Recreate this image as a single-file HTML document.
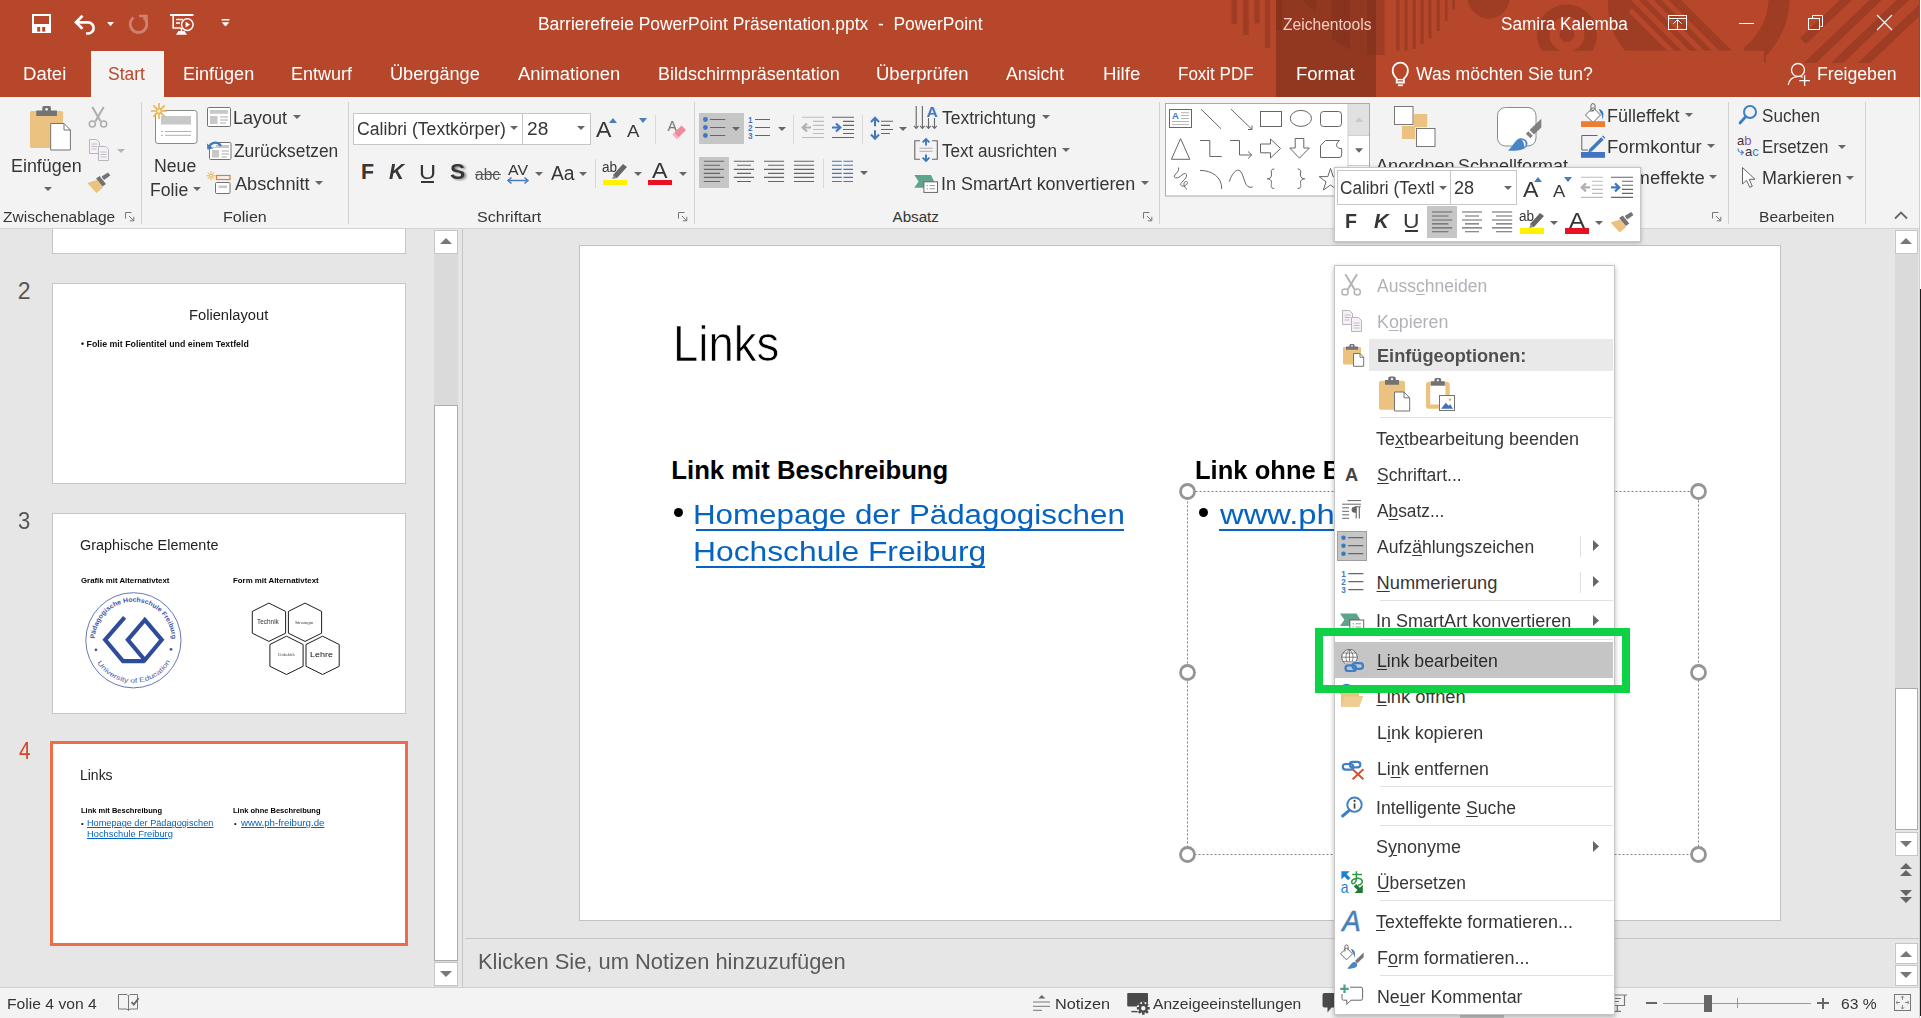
<!DOCTYPE html>
<html lang="de"><head><meta charset="utf-8"><title>PowerPoint</title>
<style>
html,body{margin:0;padding:0;}
body{width:1921px;height:1018px;overflow:hidden;position:relative;background:#fff;font-family:"Liberation Sans",sans-serif;}
div,svg,span.t{position:absolute;}
span.t{white-space:pre;transform-origin:0 50%;display:block;}
svg{overflow:visible;}
u{text-decoration-thickness:1px;text-underline-offset:2px;}
</style></head><body>
<div style="left:0px;top:0px;width:1920px;height:1018px;background:#E6E6E6;"></div>
<div style="left:0px;top:0px;width:1920px;height:97px;background:#B7472A;"></div>
<svg style="left:0;top:0;overflow:hidden" width="1920" height="64" viewBox="0 0 1920 64">
<defs><clipPath id="dc"><path d="M0 0 H1764 V50.7 H0 Z M1764 0 H1920 V63 H1764 Z M1366 50 H1386 V55.6 H1366 Z"/></clipPath></defs>
<g clip-path="url(#dc)">
<g fill="#9E3C24">
<rect x="1231.5" y="0" width="5.6" height="24"/>
<rect x="1243" y="0" width="5.7" height="35"/>
<rect x="1254.4" y="0" width="5.2" height="23.3"/>
<rect x="1264.8" y="0" width="5.2" height="48"/>
<rect x="1276" y="0" width="6" height="31"/>
<path d="M1302 0 H1317 L1315 13 Z"/>
<path d="M1331.5 0 H1350 V50 L1331.5 38.5 Z"/>
<rect x="1367" y="0" width="17.6" height="55"/>
<rect x="1396" y="0" width="3.6" height="50.7"/>
<rect x="1404.4" y="0" width="3.2" height="50.7"/>
<rect x="1412.7" y="0" width="3.2" height="49"/>
<rect x="1420.4" y="0" width="3.4" height="43.7"/>
<rect x="1428.3" y="0" width="3.2" height="38.5"/>
<rect x="1436.6" y="0" width="3.2" height="31"/>
<rect x="1445" y="0" width="2.6" height="21"/>
<rect x="1452.3" y="0" width="2.7" height="9.4"/>
<circle cx="1488.7" cy="-2.5" r="21"/>
<circle cx="1566.9" cy="34.4" r="7.5"/>
<path d="M1608 0 H1681 L1732 50.7 H1625 C1612 36 1607 18 1608 0 Z"/>
</g>
<g fill="none" stroke="#9E3C24">
<circle cx="1566.9" cy="34.4" r="23.8" stroke-width="12.4"/>
<path d="M1779 -12 C1781 14 1772 36 1755 52 L1756 66" stroke-width="21"/>
<path d="M1930 -52 L1790 82" stroke-width="8.5"/>
<path d="M1930 -26 L1790 108" stroke-width="8.5"/>
<path d="M1930 0 L1800 124" stroke-width="8.5"/>
<path d="M1852 -6 L1803 41" stroke-width="8.5"/>
</g>
<g stroke="#B7472A" stroke-width="5.2" fill="none">
<path d="M1631 -4 L1690 55"/>
<path d="M1646 -4 L1705 55"/>
<path d="M1661 -4 L1720 55"/>
<path d="M1630 10 L1672 52"/>
</g>
</g>
</svg>
<div style="left:1276px;top:0px;width:100px;height:97px;background:rgba(122,46,26,0.62);"></div>
<div style="left:91px;top:51px;width:73px;height:46px;background:#F3F3F3;"></div>
<div style="left:0px;top:97px;width:1920px;height:131px;background:#F3F3F3;"></div>
<div style="left:0px;top:228px;width:1920px;height:1px;background:#D4D4D4;"></div>
<div style="left:141px;top:102px;width:1px;height:122px;background:#D2D2D2;"></div>
<div style="left:348px;top:102px;width:1px;height:122px;background:#D2D2D2;"></div>
<div style="left:694px;top:102px;width:1px;height:122px;background:#D2D2D2;"></div>
<div style="left:1159px;top:102px;width:1px;height:122px;background:#D2D2D2;"></div>
<div style="left:1728px;top:102px;width:1px;height:122px;background:#D2D2D2;"></div>
<div style="left:1865px;top:102px;width:1px;height:122px;background:#D2D2D2;"></div>
<div style="left:699px;top:113px;width:45px;height:31px;background:#C6C6C6;"></div>
<div style="left:699px;top:157px;width:30px;height:31px;background:#C6C6C6;"></div>
<div style="left:655px;top:115px;width:1px;height:29px;background:#D8D8D8;"></div>
<div style="left:595px;top:159px;width:1px;height:29px;background:#D8D8D8;"></div>
<div style="left:793px;top:115px;width:1px;height:29px;background:#D8D8D8;"></div>
<div style="left:862px;top:115px;width:1px;height:29px;background:#D8D8D8;"></div>
<div style="left:823px;top:159px;width:1px;height:29px;background:#D8D8D8;"></div>
<div style="left:52px;top:229px;width:354px;height:25px;background:#fff;border:1px solid #C6C6C6;box-sizing:border-box;border-top:none;"></div>
<div style="left:52px;top:283px;width:354px;height:201px;background:#fff;border:1px solid #C6C6C6;box-sizing:border-box;"></div>
<div style="left:52px;top:513px;width:354px;height:201px;background:#fff;border:1px solid #C6C6C6;box-sizing:border-box;"></div>
<div style="left:50px;top:741px;width:358px;height:205px;background:#fff;border:3px solid #ED6C4A;box-sizing:border-box;"></div>
<div style="left:434px;top:230px;width:24px;height:757px;background:#DADADA;"></div>
<div style="left:434px;top:230px;width:24px;height:24px;background:#fff;border:1px solid #C6C6C6;box-sizing:border-box;"></div>
<div style="left:434px;top:405px;width:24px;height:556px;background:#fff;border:1px solid #ABABAB;box-sizing:border-box;"></div>
<div style="left:434px;top:962px;width:24px;height:24px;background:#fff;border:1px solid #C6C6C6;box-sizing:border-box;"></div>
<svg style="left:440px;top:237px;" width="12" height="8" viewBox="0 0 12 8"><path d="M0 7 L6 1 L12 7 Z" fill="#777"/></svg>
<svg style="left:440px;top:970px;" width="12" height="8" viewBox="0 0 12 8"><path d="M0 1 L6 7 L12 1 Z" fill="#777"/></svg>
<div style="left:462px;top:229px;width:1px;height:758px;background:#C6C6C6;"></div>
<div style="left:579px;top:245px;width:1202px;height:676px;background:#fff;border:1px solid #C2C2C2;box-sizing:border-box;"></div>
<div style="left:465px;top:938px;width:1455px;height:1px;background:#C6C6C6;"></div>
<div style="left:1895px;top:230px;width:23px;height:24px;background:#fff;border:1px solid #C6C6C6;box-sizing:border-box;"></div>
<svg style="left:1900px;top:237px;" width="12" height="8" viewBox="0 0 12 8"><path d="M0 7 L6 1 L12 7 Z" fill="#777"/></svg>
<div style="left:1895px;top:254px;width:23px;height:434px;background:#DADADA;"></div>
<div style="left:1895px;top:688px;width:23px;height:142px;background:#fff;border:1px solid #ABABAB;box-sizing:border-box;"></div>
<div style="left:1895px;top:832px;width:23px;height:24px;background:#fff;border:1px solid #C6C6C6;box-sizing:border-box;"></div>
<svg style="left:1900px;top:840px;" width="12" height="8" viewBox="0 0 12 8"><path d="M0 1 L6 7 L12 1 Z" fill="#777"/></svg>
<svg style="left:1900px;top:863px;" width="12" height="13" viewBox="0 0 12 13"><path d="M0 6 L6 0 L12 6 Z M0 13 L6 7 L12 13 Z" fill="#666"/></svg>
<svg style="left:1900px;top:890px;" width="12" height="13" viewBox="0 0 12 13"><path d="M0 0 L6 6 L12 0 Z M0 7 L6 13 L12 7 Z" fill="#666"/></svg>
<div style="left:1895px;top:943px;width:23px;height:21px;background:#fff;border:1px solid #C6C6C6;box-sizing:border-box;"></div>
<div style="left:1895px;top:965px;width:23px;height:21px;background:#fff;border:1px solid #C6C6C6;box-sizing:border-box;"></div>
<svg style="left:1900px;top:950px;" width="12" height="7" viewBox="0 0 12 7"><path d="M0 7 L6 1 L12 7 Z" fill="#777"/></svg>
<svg style="left:1900px;top:972px;" width="12" height="7" viewBox="0 0 12 7"><path d="M0 0 L6 6 L12 0 Z" fill="#777"/></svg>
<div style="left:0px;top:987px;width:1920px;height:31px;background:#F3F3F3;"></div>
<div style="left:0px;top:987px;width:1920px;height:1px;background:#D0D0D0;"></div>
<div style="left:1919px;top:0px;width:1px;height:1018px;background:#A83F24;"></div>
<div style="left:1919px;top:97px;width:1px;height:921px;background:#CFCFCF;"></div>
<div style="left:1920px;top:0px;width:1px;height:1018px;background:#ffffff;"></div>
<div style="left:1920px;top:289px;width:1px;height:727px;background:#1e1e1e;"></div>
<span class="t" style="left:537.61px;top:14px;font-size:17.5px;line-height:20px;color:#FFFFFF;transform:scaleX(0.9957);">Barrierefreie PowerPoint Präsentation.pptx  -  PowerPoint</span>
<span class="t" style="left:1282.53px;top:15px;font-size:16.2px;line-height:18px;color:#F2CDC2;transform:scaleX(0.9643);">Zeichentools</span>
<span class="t" style="left:1501.23px;top:14px;font-size:17.5px;line-height:20px;color:#FFFFFF;transform:scaleX(0.9802);">Samira Kalemba</span>
<span class="t" style="left:23.02px;top:63px;font-size:18.3px;line-height:21px;color:#FFFFFF;transform:scaleX(1.0137);">Datei</span>
<span class="t" style="left:183.06px;top:63px;font-size:18.3px;line-height:21px;color:#FFFFFF;transform:scaleX(0.9861);">Einfügen</span>
<span class="t" style="left:291.06px;top:63px;font-size:18.3px;line-height:21px;color:#FFFFFF;transform:scaleX(0.9832);">Entwurf</span>
<span class="t" style="left:390.14px;top:63px;font-size:18.3px;line-height:21px;color:#FFFFFF;transform:scaleX(0.9919);">Übergänge</span>
<span class="t" style="left:518.0px;top:63px;font-size:18.3px;line-height:21px;color:#FFFFFF;transform:scaleX(1.0053);">Animationen</span>
<span class="t" style="left:657.56px;top:63px;font-size:18.3px;line-height:21px;color:#FFFFFF;transform:scaleX(0.9821);">Bildschirmpräsentation</span>
<span class="t" style="left:875.61px;top:63px;font-size:18.3px;line-height:21px;color:#FFFFFF;transform:scaleX(1.0129);">Überprüfen</span>
<span class="t" style="left:1006.0px;top:63px;font-size:18.3px;line-height:21px;color:#FFFFFF;transform:scaleX(0.9702);">Ansicht</span>
<span class="t" style="left:1102.51px;top:63px;font-size:18.3px;line-height:21px;color:#FFFFFF;transform:scaleX(1.0209);">Hilfe</span>
<span class="t" style="left:1177.64px;top:63px;font-size:18.3px;line-height:21px;color:#FFFFFF;transform:scaleX(0.9295);">Foxit PDF</span>
<span class="t" style="left:1296.02px;top:63px;font-size:18.3px;line-height:21px;color:#FFFFFF;transform:scaleX(1.0122);">Format</span>
<span class="t" style="left:1415.91px;top:63px;font-size:18.3px;line-height:21px;color:#FFFFFF;transform:scaleX(0.9646);">Was möchten Sie tun?</span>
<span class="t" style="left:1816.59px;top:63px;font-size:18.3px;line-height:21px;color:#FFFFFF;transform:scaleX(0.9671);">Freigeben</span>
<span class="t" style="left:108.21px;top:63px;font-size:18.3px;line-height:21px;color:#B7472A;transform:scaleX(0.9559);">Start</span>
<span class="t" style="left:2.53px;top:208px;font-size:15.2px;line-height:17px;color:#363636;transform:scaleX(1.0221);">Zwischenablage</span>
<span class="t" style="left:223.21px;top:208px;font-size:15.2px;line-height:17px;color:#363636;transform:scaleX(1.0589);">Folien</span>
<span class="t" style="left:476.78px;top:208px;font-size:15.2px;line-height:17px;color:#363636;transform:scaleX(1.0585);">Schriftart</span>
<span class="t" style="left:892.5px;top:208px;font-size:15.2px;line-height:17px;color:#363636;">Absatz</span>
<span class="t" style="left:1758.75px;top:208px;font-size:15.2px;line-height:17px;color:#363636;transform:scaleX(1.0248);">Bearbeiten</span>
<span class="t" style="left:11.07px;top:155px;font-size:18.3px;line-height:21px;color:#363636;transform:scaleX(0.9789);">Einfügen</span>
<span class="t" style="left:153.59px;top:155px;font-size:18.3px;line-height:21px;color:#363636;transform:scaleX(0.9657);">Neue</span>
<span class="t" style="left:149.59px;top:179px;font-size:18.3px;line-height:21px;color:#363636;transform:scaleX(0.9653);">Folie</span>
<span class="t" style="left:233.06px;top:107px;font-size:18.3px;line-height:21px;color:#363636;transform:scaleX(0.9852);">Layout</span>
<span class="t" style="left:233.98px;top:140px;font-size:18.3px;line-height:21px;color:#363636;transform:scaleX(0.9495);">Zurücksetzen</span>
<span class="t" style="left:234.5px;top:173px;font-size:18.3px;line-height:21px;color:#363636;transform:scaleX(0.9927);">Abschnitt</span>
<span class="t" style="left:942.15px;top:107px;font-size:18.3px;line-height:21px;color:#363636;transform:scaleX(0.9537);">Textrichtung</span>
<span class="t" style="left:942.16px;top:140px;font-size:18.3px;line-height:21px;color:#363636;transform:scaleX(0.9350);">Text ausrichten</span>
<span class="t" style="left:940.89px;top:173px;font-size:18.3px;line-height:21px;color:#363636;transform:scaleX(0.9808);">In SmartArt konvertieren</span>
<span class="t" style="left:1607.06px;top:105px;font-size:18.3px;line-height:21px;color:#363636;transform:scaleX(0.9832);">Fülleffekt</span>
<span class="t" style="left:1607.02px;top:136px;font-size:18.3px;line-height:21px;color:#363636;transform:scaleX(1.0143);">Formkontur</span>
<span class="t" style="left:1607.03px;top:167px;font-size:18.3px;line-height:21px;color:#363636;transform:scaleX(1.0065);">Formeffekte</span>
<span class="t" style="left:1762.23px;top:105px;font-size:18.3px;line-height:21px;color:#363636;transform:scaleX(0.9338);">Suchen</span>
<span class="t" style="left:1761.65px;top:136px;font-size:18.3px;line-height:21px;color:#363636;transform:scaleX(0.9211);">Ersetzen</span>
<span class="t" style="left:1761.57px;top:167px;font-size:18.3px;line-height:21px;color:#363636;transform:scaleX(0.9795);">Markieren</span>
<span class="t" style="left:1375.5px;top:155px;font-size:18.3px;line-height:21px;color:#363636;transform:scaleX(0.9927);">Anordnen</span>
<span class="t" style="left:1458.19px;top:155px;font-size:18.3px;line-height:21px;color:#363636;transform:scaleX(0.9838);">Schnellformat</span>
<div style="left:353px;top:113px;width:238px;height:32px;background:#fff;border:1px solid #C6C6C6;box-sizing:border-box;"></div>
<div style="left:522px;top:113px;width:1px;height:32px;background:#C6C6C6;"></div>
<svg style="left:43.5px;top:187.0px;" width="8" height="4" viewBox="0 0 8 4"><path d="M0 0 L8 0 L4.0 4 Z" fill="#666"/></svg>
<svg style="left:193.0px;top:187.0px;" width="8" height="4" viewBox="0 0 8 4"><path d="M0 0 L8 0 L4.0 4 Z" fill="#666"/></svg>
<svg style="left:292.5px;top:115.0px;" width="8" height="4" viewBox="0 0 8 4"><path d="M0 0 L8 0 L4.0 4 Z" fill="#666"/></svg>
<svg style="left:315.0px;top:181.0px;" width="8" height="4" viewBox="0 0 8 4"><path d="M0 0 L8 0 L4.0 4 Z" fill="#666"/></svg>
<svg style="left:1041.5px;top:115.0px;" width="8" height="4" viewBox="0 0 8 4"><path d="M0 0 L8 0 L4.0 4 Z" fill="#666"/></svg>
<svg style="left:1062.0px;top:148.0px;" width="8" height="4" viewBox="0 0 8 4"><path d="M0 0 L8 0 L4.0 4 Z" fill="#666"/></svg>
<svg style="left:1141.0px;top:181.0px;" width="8" height="4" viewBox="0 0 8 4"><path d="M0 0 L8 0 L4.0 4 Z" fill="#666"/></svg>
<svg style="left:1685.0px;top:112.5px;" width="8" height="4" viewBox="0 0 8 4"><path d="M0 0 L8 0 L4.0 4 Z" fill="#666"/></svg>
<svg style="left:1707.0px;top:144.0px;" width="8" height="4" viewBox="0 0 8 4"><path d="M0 0 L8 0 L4.0 4 Z" fill="#666"/></svg>
<svg style="left:1709.0px;top:174.5px;" width="8" height="4" viewBox="0 0 8 4"><path d="M0 0 L8 0 L4.0 4 Z" fill="#666"/></svg>
<svg style="left:1838.0px;top:144.5px;" width="8" height="4" viewBox="0 0 8 4"><path d="M0 0 L8 0 L4.0 4 Z" fill="#666"/></svg>
<svg style="left:1846.0px;top:175.5px;" width="8" height="4" viewBox="0 0 8 4"><path d="M0 0 L8 0 L4.0 4 Z" fill="#666"/></svg>
<svg style="left:510.0px;top:126.0px;" width="8" height="4" viewBox="0 0 8 4"><path d="M0 0 L8 0 L4.0 4 Z" fill="#666"/></svg>
<svg style="left:577.0px;top:126.0px;" width="8" height="4" viewBox="0 0 8 4"><path d="M0 0 L8 0 L4.0 4 Z" fill="#666"/></svg>
<svg style="left:535.0px;top:171.5px;" width="8" height="4" viewBox="0 0 8 4"><path d="M0 0 L8 0 L4.0 4 Z" fill="#666"/></svg>
<svg style="left:578.5px;top:171.5px;" width="8" height="4" viewBox="0 0 8 4"><path d="M0 0 L8 0 L4.0 4 Z" fill="#666"/></svg>
<svg style="left:633.5px;top:171.5px;" width="8" height="4" viewBox="0 0 8 4"><path d="M0 0 L8 0 L4.0 4 Z" fill="#666"/></svg>
<svg style="left:678.5px;top:171.5px;" width="8" height="4" viewBox="0 0 8 4"><path d="M0 0 L8 0 L4.0 4 Z" fill="#666"/></svg>
<svg style="left:732.0px;top:126.5px;" width="8" height="4" viewBox="0 0 8 4"><path d="M0 0 L8 0 L4.0 4 Z" fill="#666"/></svg>
<svg style="left:778.0px;top:126.5px;" width="8" height="4" viewBox="0 0 8 4"><path d="M0 0 L8 0 L4.0 4 Z" fill="#666"/></svg>
<svg style="left:898.5px;top:126.5px;" width="8" height="4" viewBox="0 0 8 4"><path d="M0 0 L8 0 L4.0 4 Z" fill="#666"/></svg>
<svg style="left:860.0px;top:171.0px;" width="8" height="4" viewBox="0 0 8 4"><path d="M0 0 L8 0 L4.0 4 Z" fill="#666"/></svg>
<svg style="left:117.0px;top:149.0px;" width="8" height="4" viewBox="0 0 8 4"><path d="M0 0 L8 0 L4.0 4 Z" fill="#B5B5B5"/></svg>
<span class="t" style="left:357.12px;top:119px;font-size:18px;line-height:20px;color:#363636;transform:scaleX(0.9798);">Calibri (Textkörper)</span>
<span class="t" style="left:527.04px;top:119px;font-size:18px;line-height:20px;color:#363636;transform:scaleX(1.0616);">28</span>
<span class="t" style="left:596.3px;top:117px;font-size:21.8px;line-height:25px;color:#363636;transform:scaleX(1.0619);">A</span>
<span class="t" style="left:626.9px;top:122px;font-size:16.8px;line-height:19px;color:#363636;transform:scaleX(1.1102);">A</span>
<svg style="left:609px;top:118px;" width="8" height="5" viewBox="0 0 8 5"><path d="M0 5 L4 0 L8 5 Z" fill="#4A7EBB"/></svg>
<svg style="left:639px;top:118px;" width="8" height="5" viewBox="0 0 8 5"><path d="M0 0 L8 0 L4 5 Z" fill="#4A7EBB"/></svg>
<span class="t" style="left:361.01px;top:160px;font-size:21.3px;line-height:24px;color:#363636;font-weight:bold;">F</span>
<span class="t" style="left:389.28px;top:160px;font-size:21.3px;line-height:24px;color:#363636;font-weight:bold;font-style:italic;transform:scaleX(0.9755);">K</span>
<span class="t" style="left:418.92px;top:160px;font-size:21px;line-height:23px;color:#363636;transform:scaleX(1.1274);">U</span>
<div style="left:421px;top:181px;width:13px;height:1.5px;background:#363636;"></div>
<span class="t" style="left:451.62px;top:161px;font-size:21.3px;line-height:24px;color:#8a8a8a;font-weight:bold;transform:scaleX(1.0712);filter:blur(0.9px);">S</span>
<span class="t" style="left:450.32px;top:160px;font-size:21.3px;line-height:24px;color:#363636;font-weight:bold;transform:scaleX(1.0712);">S</span>
<span class="t" style="left:475.38px;top:166px;font-size:16px;line-height:17px;color:#555;transform:scaleX(0.9709);">abc</span>
<div style="left:475px;top:174px;width:26px;height:1px;background:#555;"></div>
<span class="t" style="left:508.0px;top:161px;font-size:15.5px;line-height:17px;color:#363636;transform:scaleX(1.0280);">AV</span>
<svg style="left:507px;top:177px;" width="22" height="7" viewBox="0 0 22 7"><path d="M1 3.5 H21 M4.5 0.5 L1 3.5 L4.5 6.5 M17.5 0.5 L21 3.5 L17.5 6.5" stroke="#4A7EBB" stroke-width="1.5" fill="none"/></svg>
<span class="t" style="left:551.0px;top:162px;font-size:20px;line-height:22px;color:#363636;transform:scaleX(0.9629);">Aa</span>
<span class="t" style="left:602.46px;top:159px;font-size:14px;line-height:16px;color:#363636;transform:scaleX(0.9705);">ab</span>
<svg style="left:612px;top:162px;" width="16" height="17" viewBox="0 0 16 17"><path d="M3 16 L1 13 L11 2 L15 5 L5 16 Z" fill="#666"/><path d="M0 17 L2 13 L5 16 Z" fill="#888"/></svg>
<div style="left:603px;top:179.5px;width:24px;height:5.5px;background:#FFF200;"></div>
<span class="t" style="left:652.0px;top:158px;font-size:22px;line-height:25px;color:#363636;transform:scaleX(1.0585);">A</span>
<div style="left:648px;top:179.5px;width:24px;height:5.5px;background:#E81123;"></div>
<span class="t" style="left:17.85px;top:278px;font-size:23px;line-height:26px;color:#555;">2</span>
<span class="t" style="left:18.12px;top:508px;font-size:23px;line-height:26px;color:#555;transform:scaleX(0.9607);">3</span>
<span class="t" style="left:18.58px;top:738px;font-size:23px;line-height:26px;color:#D24726;transform:scaleX(0.9037);">4</span>
<span class="t" style="left:188.82px;top:306px;font-size:15.5px;line-height:17px;color:#222;transform:scaleX(0.9486);">Folienlayout</span>
<span class="t" style="left:80.74px;top:339px;font-size:8.5px;line-height:10px;color:#111;font-weight:bold;transform:scaleX(1.0362);">• Folie mit Folientitel und einem Textfeld</span>
<span class="t" style="left:80.28px;top:536px;font-size:15.5px;line-height:17px;color:#222;transform:scaleX(0.9284);">Graphische Elemente</span>
<span class="t" style="left:80.69px;top:576px;font-size:8px;line-height:9px;color:#000;font-weight:bold;transform:scaleX(0.9781);">Grafik mit Alternativtext</span>
<span class="t" style="left:233.49px;top:576px;font-size:8px;line-height:9px;color:#000;font-weight:bold;transform:scaleX(0.9810);">Form mit Alternativtext</span>
<svg style="left:84.5px;top:591.5px;" width="97" height="97" viewBox="0 0 97 97">
<circle cx="48.4" cy="48.3" r="47.6" fill="#fff" stroke="#3F55A3" stroke-width="0.8"/>
<path d="M39.6 25.4 L20.1 47.85 L38 69.1 H59.3" fill="none" stroke="#2F4B9B" stroke-width="4.1" stroke-linejoin="miter"/>
<path d="M59.8 27.9 L76.75 47.85 L59.8 68.1 L42.8 47.85 Z" fill="none" stroke="#2F4B9B" stroke-width="4.1" stroke-linejoin="miter"/>
<circle cx="10.95" cy="57.8" r="1.4" fill="#3F55A3"/><circle cx="86" cy="57.3" r="1.4" fill="#3F55A3"/>
<path id="arcT" d="M9.9 48.3 A38.5 38.5 0 0 1 86.9 48.3" fill="none"/>
<path id="arcB" d="M5.8 48.3 A42.6 42.6 0 0 0 91 48.3" fill="none"/>
<text font-family="Liberation Sans, sans-serif" font-size="6.6" font-weight="bold" fill="#3F55A3" textLength="118" lengthAdjust="spacingAndGlyphs"><textPath href="#arcT" startOffset="1.5">Pädagogische Hochschule Freiburg</textPath></text>
<text font-family="Liberation Sans, sans-serif" font-size="6.7" fill="#4A60AA" textLength="88" lengthAdjust="spacingAndGlyphs"><textPath href="#arcB" startOffset="23.6">University of Education</textPath></text>
</svg>
<svg style="left:0px;top:0px;" width="480" height="760" viewBox="0 0 480 760"><polygon points="268.9,603.1 285.6,611.4 285.6,633.2 268.9,641.4 252.3,633.2 252.3,611.4" fill="#fff" stroke="#111" stroke-width="0.95"/><polygon points="305.0,603.1 321.6,611.4 321.6,633.2 305.0,641.4 288.4,633.2 288.4,611.4" fill="#fff" stroke="#111" stroke-width="0.95"/><polygon points="286.5,636.2 303.1,644.5 303.1,666.3 286.5,674.5 269.9,666.3 269.9,644.5" fill="#fff" stroke="#111" stroke-width="0.95"/><polygon points="322.6,636.2 339.2,644.5 339.2,666.3 322.6,674.5 306.0,666.3 306.0,644.5" fill="#fff" stroke="#111" stroke-width="0.95"/></svg>
<span class="t" style="left:257.07px;top:618px;font-size:6.6px;line-height:7px;color:#333;transform:scaleX(0.9765);">Technik</span>
<span class="t" style="left:294.79px;top:620px;font-size:4.4px;line-height:5px;color:#444;transform:scaleX(1.0482);">Strategie</span>
<span class="t" style="left:277.62px;top:652px;font-size:4px;line-height:5px;color:#555;transform:scaleX(1.1792);">Didaktik</span>
<span class="t" style="left:310.48px;top:650px;font-size:7.9px;line-height:9px;color:#111;transform:scaleX(1.1366);">Lehre</span>
<span class="t" style="left:79.88px;top:766px;font-size:15.5px;line-height:17px;color:#222;transform:scaleX(0.9008);">Links</span>
<span class="t" style="left:80.51px;top:806px;font-size:8px;line-height:9px;color:#000;font-weight:bold;transform:scaleX(0.9390);">Link mit Beschreibung</span>
<span class="t" style="left:233.01px;top:806px;font-size:8px;line-height:9px;color:#000;font-weight:bold;transform:scaleX(0.9374);">Link ohne Beschreibung</span>
<span class="t" style="left:81px;top:820px;font-size:7px;line-height:7px;color:#000;">•</span>
<span class="t" style="left:234px;top:820px;font-size:7px;line-height:7px;color:#000;">•</span>
<span class="t" style="left:86.77px;top:818px;font-size:8.6px;line-height:10px;color:#0563C1;transform:scaleX(1.0663);text-decoration:underline;text-decoration-thickness:0.7px;text-underline-offset:1px;">Homepage der Pädagogischen</span>
<span class="t" style="left:86.76px;top:829px;font-size:8.6px;line-height:10px;color:#0563C1;transform:scaleX(1.0829);text-decoration:underline;text-decoration-thickness:0.7px;text-underline-offset:1px;">Hochschule Freiburg</span>
<span class="t" style="left:240.6px;top:818px;font-size:8.6px;line-height:10px;color:#0563C1;transform:scaleX(1.1269);text-decoration:underline;text-decoration-thickness:0.7px;text-underline-offset:1px;">www.ph-freiburg.de</span>
<span class="t" style="left:673.26px;top:316px;font-size:49.5px;line-height:55px;color:#000;transform:scaleX(0.9200);-webkit-text-stroke:0.7px #fff;">Links</span>
<span class="t" style="left:671.34px;top:456px;font-size:25.7px;line-height:28px;color:#000;font-weight:bold;">Link mit Beschreibung</span>
<span class="t" style="left:1195.34px;top:456px;font-size:25.7px;line-height:28px;color:#000;font-weight:bold;transform:scaleX(0.9956);">Link ohne Beschreibung</span>
<div style="left:673.5px;top:508px;width:9px;height:9px;background:#000;border-radius:50%;"></div>
<div style="left:1198.5px;top:508px;width:9px;height:9px;background:#000;border-radius:50%;"></div>
<span class="t" style="left:693.29px;top:498px;font-size:28.2px;line-height:32px;color:#0563C1;transform:scaleX(1.1111);">Homepage der Pädagogischen</span>
<div style="left:695.5px;top:528.7px;width:428px;height:2px;background:#0563C1;"></div>
<span class="t" style="left:693.26px;top:535px;font-size:28.2px;line-height:32px;color:#0563C1;transform:scaleX(1.1276);">Hochschule Freiburg</span>
<div style="left:695.5px;top:565.5px;width:289.5px;height:2px;background:#0563C1;"></div>
<span class="t" style="left:1219.5px;top:498px;font-size:28.2px;line-height:32px;color:#0563C1;transform:scaleX(1.1619);">www.ph</span>
<div style="left:1219px;top:528.7px;width:273.5px;height:2px;background:#0563C1;"></div>
<svg style="left:0px;top:0px;" width="1921" height="1018" viewBox="0 0 1921 1018"><rect x="1187.5" y="491.5" width="511" height="363" fill="none" stroke="#808080" stroke-width="1" stroke-dasharray="2 2"/><circle cx="1187.5" cy="491.5" r="7" fill="#fff" stroke="#959595" stroke-width="2.8"/><circle cx="1698.5" cy="491.5" r="7" fill="#fff" stroke="#959595" stroke-width="2.8"/><circle cx="1187.5" cy="672.5" r="7" fill="#fff" stroke="#959595" stroke-width="2.8"/><circle cx="1698.5" cy="672.5" r="7" fill="#fff" stroke="#959595" stroke-width="2.8"/><circle cx="1187.5" cy="854.5" r="7" fill="#fff" stroke="#959595" stroke-width="2.8"/><circle cx="1698.5" cy="854.5" r="7" fill="#fff" stroke="#959595" stroke-width="2.8"/><circle cx="1443" cy="491.5" r="7" fill="#fff" stroke="#959595" stroke-width="2.8"/><circle cx="1443" cy="854.5" r="7" fill="#fff" stroke="#959595" stroke-width="2.8"/></svg>
<span class="t" style="left:478.25px;top:949px;font-size:22px;line-height:25px;color:#5a5a5a;transform:scaleX(0.9957);">Klicken Sie, um Notizen hinzuzufügen</span>
<span class="t" style="left:7.25px;top:995px;font-size:15.5px;line-height:17px;color:#363636;transform:scaleX(1.0111);">Folie 4 von 4</span>
<span class="t" style="left:1055.4px;top:995px;font-size:15.5px;line-height:17px;color:#363636;transform:scaleX(1.0496);">Notizen</span>
<span class="t" style="left:1152.5px;top:995px;font-size:15.5px;line-height:17px;color:#363636;transform:scaleX(1.0060);">Anzeigeeinstellungen</span>
<span class="t" style="left:1840.82px;top:995px;font-size:15.5px;line-height:17px;color:#363636;transform:scaleX(1.0107);">63 %</span>
<div style="left:1646px;top:1002px;width:11px;height:2.4px;background:#666;"></div>
<div style="left:1663px;top:1002.5px;width:148px;height:1.5px;background:#999;"></div>
<div style="left:1704px;top:995px;width:8px;height:17px;background:#666;"></div>
<div style="left:1736.5px;top:998px;width:1.5px;height:10px;background:#999;"></div>
<div style="left:1817px;top:1002px;width:11.5px;height:2.4px;background:#666;"></div>
<div style="left:1821.6px;top:997.5px;width:2.4px;height:11.5px;background:#666;"></div>
<svg style="left:0px;top:0px;" width="1921" height="1018" viewBox="0 0 1921 1018"><path d="M118.5 994.5 H127 L128.5 996 V1010.5 L127 1009 H118.5 Z M128.5 996 L130 994.5 H137.5 V1009 H130 L128.5 1010.5" fill="none" stroke="#777" stroke-width="1"/><path d="M131.5 1002 L133.8 1004.6 L138.6 998.2" fill="none" stroke="#666" stroke-width="1.8"/><path d="M1038.3 998.6 H1045.3 L1041.8 995 Z" fill="#666"/><path d="M1033 1002 H1050 M1033 1006.3 H1050 M1033 1010.3 H1042" stroke="#777" stroke-width="1"/><rect x="1127.2" y="993" width="20.8" height="13.6" rx="1" fill="#4A4A4A"/><path d="M1131.3 1011.6 H1138" stroke="#4A4A4A" stroke-width="1.4"/><circle cx="1143.3" cy="1008.3" r="6.6" fill="#F3F3F3"/><path d="M1146.80 1008.30 L1149.70 1008.30 M1145.77 1010.77 L1147.83 1012.83 M1143.30 1011.80 L1143.30 1014.70 M1140.83 1010.77 L1138.77 1012.83 M1139.80 1008.30 L1136.90 1008.30 M1140.83 1005.83 L1138.77 1003.77 M1143.30 1004.80 L1143.30 1001.90 M1145.77 1005.83 L1147.83 1003.77 " stroke="#4A4A4A" stroke-width="2.6"/><circle cx="1143.3" cy="1008.3" r="3.4" fill="none" stroke="#4A4A4A" stroke-width="2.4"/><path d="M1322.5 995 Q1322.5 993 1324.5 993 H1340 V1007.5 H1331.5 L1327.5 1012.5 V1007.5 H1324.5 Q1322.5 1007.5 1322.5 1005.5 Z" fill="#4A4A4A"/><path d="M1607 995 H1627 M1610 995 V1005.5 H1624.5 V995 M1613 998.5 H1621 M1613 1001.5 H1619 M1617.3 1005.5 V1011 M1613.5 1011.3 H1621" fill="none" stroke="#777" stroke-width="1.2"/><rect x="1460" y="1015" width="44" height="3" fill="#C6C6C6"/><rect x="1894.5" y="994.5" width="16" height="16" fill="none" stroke="#777" stroke-width="1"/><path d="M1902.5 996 V1000 M1902.5 1005 V1009 M1896 1002.5 H1900 M1905 1002.5 H1909 M1901 997.6 L1902.5 996 L1904 997.6 M1901 1007.4 L1902.5 1009 L1904 1007.4 M1897.6 1001 L1896 1002.5 L1897.6 1004 M1907.4 1001 L1909 1002.5 L1907.4 1004" fill="none" stroke="#777" stroke-width="0.9"/></svg>
<svg style="left:0px;top:0px;" width="1920" height="97" viewBox="0 0 1920 97"><rect x="33" y="15" width="17" height="17" fill="none" stroke="#fff" stroke-width="2"/><rect x="33" y="24" width="17" height="8" fill="#fff"/><rect x="37.2" y="27" width="3" height="4.6" fill="#B7472A"/><rect x="42.2" y="27" width="3" height="4.6" fill="#B7472A"/><path d="M77 22.3 H88 a5.6 5.6 0 0 1 0 11.2 H86" fill="none" stroke="#fff" stroke-width="2.7"/><path d="M82.5 15.8 L76 22.3 L82.5 28.8" fill="none" stroke="#fff" stroke-width="2.7"/><path d="M107 22 H114 L110.5 26.2 Z" fill="#fff"/><g opacity="0.32"><path d="M133.5 17.5 A8.3 8.3 0 1 0 143.5 17.5" fill="none" stroke="#fff" stroke-width="2.7"/><path d="M139 16 H146.5 V23" fill="none" stroke="#fff" stroke-width="2.4"/></g><rect x="170" y="14" width="23.5" height="2" fill="#fff"/><path d="M173.2 16 V28 H181" fill="none" stroke="#fff" stroke-width="1.6"/><path d="M176 19.5 H183 M176 23 H180" stroke="#fff" stroke-width="1.3"/><circle cx="187.3" cy="24.6" r="5.8" fill="#B7472A" stroke="#fff" stroke-width="1.5"/><path d="M185.6 21.8 L190 24.6 L185.6 27.4 Z" fill="#fff"/><path d="M178.5 31 L176 34.8 H187 L184.5 31 Z" fill="#fff"/><path d="M181.5 28 V31" stroke="#fff" stroke-width="1.5"/><rect x="221.6" y="19" width="7.8" height="1.5" fill="#fff"/><path d="M221.6 22.2 H229.4 L225.5 26.4 Z" fill="#fff"/><rect x="1668.5" y="15.5" width="18" height="14" fill="none" stroke="#fff" stroke-width="1"/><path d="M1668.5 18.5 H1686.5 M1677.5 20 V29.5 M1673.3 23.8 L1677.5 19.6 L1681.7 23.8" fill="none" stroke="#fff" stroke-width="1"/><path d="M1739 23.5 H1754" stroke="#fff" stroke-width="1"/><path d="M1812.5 18 V15.5 H1822.5 V26.5 H1820.5" fill="none" stroke="#fff" stroke-width="1"/><rect x="1808.5" y="18.5" width="11" height="11" fill="none" stroke="#fff" stroke-width="1"/><path d="M1877 15 L1892 30 M1892 15 L1877 30" stroke="#fff" stroke-width="1.1"/><path d="M1396.7 82.5 V78.6 C1394 76.2 1392.7 73.6 1392.7 70.2 A7.6 7.6 0 0 1 1407.9 70.2 C1407.9 73.6 1406.6 76.2 1403.9 78.6 V82.5 Z" fill="none" stroke="#fff" stroke-width="1.8"/><path d="M1396.7 79.6 H1403.9" stroke="#fff" stroke-width="1.4"/><path d="M1398 85.3 H1402.9" stroke="#fff" stroke-width="1.7"/><circle cx="1798" cy="70" r="6.5" fill="none" stroke="#fff" stroke-width="1.3"/><path d="M1788.2 85 C1789 80 1792.5 77.3 1797 76.7 M1800.5 76.6 C1801.3 76.8 1802 77 1802.6 77.3" fill="none" stroke="#fff" stroke-width="1.3"/><path d="M1799.2 80.6 H1810 M1804.6 75.2 V86" stroke="#fff" stroke-width="1.3"/></svg>
<svg style="left:0px;top:0px;" width="1920" height="230" viewBox="0 0 1920 230"><rect x="30" y="111" width="33" height="37" rx="1.8" fill="#EBC27F"/><path d="M36.3 110.5 H42.3 V107.5 Q42.3 106 43.8 106 H49.4 Q50.9 106 50.9 107.5 V110.5 H56.9 V116 H36.3 Z" fill="#737373"/><circle cx="46.6" cy="109.3" r="1.4" fill="#F3F3F3"/><path d="M50.7 123.5 H64 L70.4 130 V150 H50.7 Z" fill="#fff" stroke="#737373" stroke-width="1"/><path d="M64 123.5 V130 H70.4" fill="none" stroke="#737373" stroke-width="1"/><path d="M92.3 107 L100.7 121.5 M103.7 107 L95.3 121.5" stroke="#ADADAD" stroke-width="2" fill="none"/><circle cx="92.3" cy="124" r="3" fill="none" stroke="#ADADAD" stroke-width="1.5"/><circle cx="103.7" cy="124" r="3" fill="none" stroke="#ADADAD" stroke-width="1.5"/><g fill="#F7F1F7" stroke="#B9B4BC" stroke-width="1"><path d="M89.5 139.5 H96.5 L99.5 142.5 V153.5 H89.5 Z"/><path d="M98.5 146.5 H105.5 L108.5 149.5 V160.5 H98.5 Z"/></g><path d="M91.5 144 H97.5 M91.5 146.5 H97.5 M91.5 149 H96.5 M100.5 152 H106.5 M100.5 154.5 H106.5 M100.5 157 H106.5" stroke="#B9B4BC" stroke-width="0.9"/><path d="M87.3 183 L97 180 L103 187.5 L96.5 193 Z" fill="#EBC27F"/><path d="M96 178.5 L99.5 176 L106 184 L102.5 186.5 Z" fill="#737373"/><path d="M101.5 176.5 L108 172.6 L110.3 175.6 L104 180 Z" fill="#737373"/><rect x="155.5" y="110.5" width="41.5" height="33" rx="2.5" fill="#fff" stroke="#8A8A8A" stroke-width="1"/><rect x="161" y="116" width="30" height="8.5" fill="#C8C8C8"/><path d="M165 131.5 H191 M165 135.3 H191 M161 131.5 H163.2 M161 135.3 H163.2" stroke="#B0B0B0" stroke-width="1"/><circle cx="159" cy="111" r="4.5" fill="#F3F3F3"/><path d="M161.30 111.00 L167.00 111.00 M160.63 112.63 L164.66 116.66 M159.00 113.30 L159.00 119.00 M157.37 112.63 L153.34 116.66 M156.70 111.00 L151.00 111.00 M157.37 109.37 L153.34 105.34 M159.00 108.70 L159.00 103.00 M160.63 109.37 L164.66 105.34 " stroke="#EBB54C" stroke-width="1.6" fill="none"/><circle cx="159" cy="111" r="2.3" fill="none" stroke="#EBB54C" stroke-width="1.2800000000000002"/><rect x="207.5" y="107.5" width="23" height="19" rx="1.2" fill="#fff" stroke="#737373" stroke-width="1"/><rect x="210" y="110" width="18" height="3.8" fill="#C8C8C8"/><rect x="210" y="116" width="7.5" height="8" fill="#C8C8C8"/><path d="M220 117 H228 M220 120 H228 M220 123 H226" stroke="#ADADAD" stroke-width="1"/><rect x="209.5" y="142.5" width="21.5" height="17" rx="1.2" fill="#fff" stroke="#737373" stroke-width="1"/><rect x="212" y="145" width="17" height="3" fill="#C8C8C8"/><rect x="212" y="150" width="7" height="7.5" fill="#C8C8C8"/><path d="M221.5 151 H229 M221.5 154 H229 M221.5 157 H227" stroke="#ADADAD" stroke-width="1"/><path d="M206.5 141.5 H216 V147 H206.5 Z" fill="#F3F3F3"/><path d="M209.5 147.5 C210 142.5 217 140.5 221 146" fill="none" stroke="#4178BE" stroke-width="2.2"/><path d="M207 143.5 L207.3 149.6 L213.3 148.5 Z" fill="#4178BE"/><path d="M212.40 175.80 L215.60 175.80 M211.99 176.79 L214.25 179.05 M211.00 177.20 L211.00 180.40 M210.01 176.79 L207.75 179.05 M209.60 175.80 L206.40 175.80 M210.01 174.81 L207.75 172.55 M211.00 174.40 L211.00 171.20 M211.99 174.81 L214.25 172.55 " stroke="#EBB54C" stroke-width="1" fill="none"/><circle cx="211" cy="175.8" r="1.4" fill="none" stroke="#EBB54C" stroke-width="0.8"/><rect x="216.5" y="175.5" width="13.5" height="4" fill="none" stroke="#E8782E" stroke-width="1.2"/><rect x="215.5" y="182.5" width="14.5" height="11" rx="1" fill="#fff" stroke="#737373" stroke-width="1"/><rect x="218.5" y="185.5" width="8.5" height="2.6" fill="#C8C8C8"/><path d="M125.5 218.5 V212.5 H131.5" fill="none" stroke="#777" stroke-width="1"/><path d="M129.0 216.0 L133.5 220.5 M133.8 216.8 V220.8 H129.8" fill="none" stroke="#777" stroke-width="1"/><path d="M678.5 218.5 V212.5 H684.5" fill="none" stroke="#777" stroke-width="1"/><path d="M682.0 216.0 L686.5 220.5 M686.8 216.8 V220.8 H682.8" fill="none" stroke="#777" stroke-width="1"/><path d="M1143.5 218.5 V212.5 H1149.5" fill="none" stroke="#777" stroke-width="1"/><path d="M1147.0 216.0 L1151.5 220.5 M1151.8 216.8 V220.8 H1147.8" fill="none" stroke="#777" stroke-width="1"/><path d="M1712.5 218.5 V212.5 H1718.5" fill="none" stroke="#777" stroke-width="1"/><path d="M1716.0 216.0 L1720.5 220.5 M1720.8 216.8 V220.8 H1716.8" fill="none" stroke="#777" stroke-width="1"/><path d="M1895 218.5 L1901 212.5 L1907 218.5" fill="none" stroke="#666" stroke-width="1.8"/></svg>
<svg style="left:0px;top:0px;" width="1920" height="230" viewBox="0 0 1920 230"><circle cx="705.4" cy="119.5" r="2.4" fill="#4178BE"/><circle cx="705.4" cy="127.5" r="2.4" fill="#4178BE"/><circle cx="705.4" cy="135.5" r="2.4" fill="#4178BE"/><path d="M710.0 119.5 H725.1999999999999 M710.0 127.5 H725.1999999999999 M710.0 135.5 H725.1999999999999" stroke="#666666" stroke-width="1.2" fill="none"/><text x="748" y="122.5" font-family="Liberation Sans, sans-serif" font-size="8.2" font-weight="bold" fill="#4178BE">1</text><text x="748" y="130.5" font-family="Liberation Sans, sans-serif" font-size="8.2" font-weight="bold" fill="#4178BE">2</text><text x="748" y="138.5" font-family="Liberation Sans, sans-serif" font-size="8.2" font-weight="bold" fill="#4178BE">3</text><path d="M755 119.5 H770 M755 127.5 H770 M755 135.5 H770" stroke="#666666" stroke-width="1.2" fill="none"/><path d="M802 117.3 H824 M802 137.5 H824" stroke="#BDBDBD" stroke-width="1.1" fill="none"/><path d="M813 121.39999999999999 H824 M813 125.39999999999999 H824 M813 129.5 H824 M813 133.5 H824" stroke="#BDBDBD" stroke-width="1.1" fill="none"/><path d="M811 127.5 H803.5 M807 123.5 L802.7 127.5 L807 131.5" stroke="#B0B0B0" stroke-width="2.2" fill="none"/><path d="M832 117.3 H854 M832 137.5 H854" stroke="#666666" stroke-width="1.1" fill="none"/><path d="M843 121.39999999999999 H854 M843 125.39999999999999 H854 M843 129.5 H854 M843 133.5 H854" stroke="#666666" stroke-width="1.1" fill="none"/><path d="M832 127.5 H839.5 M836 123.5 L840.3 127.5 L836 131.5" stroke="#4178BE" stroke-width="2.2" fill="none"/><path d="M875 118.5 V126.3 M875 130.2 V138 M871 122 L875 117.8 L879 122 M871 134.5 L875 138.7 L879 134.5" stroke="#4178BE" stroke-width="2" fill="none"/><path d="M881 121.2 H893 M881 129.5 H893" stroke="#666666" stroke-width="1.1" fill="none"/><path d="M881 125.4 H890 M881 133.5 H890" stroke="#666666" stroke-width="1.1" fill="none"/><path d="M916.2 106 V128 M922.4 106 V128 M928.5 118 V128 M934.5 118 V128" stroke="#666666" stroke-width="1.1" fill="none"/><path d="M913.9000000000001 125.8 L916.2 128.4 L918.5 125.8" stroke="#666666" stroke-width="1.1" fill="none"/><path d="M920.1 125.8 L922.4 128.4 L924.6999999999999 125.8" stroke="#666666" stroke-width="1.1" fill="none"/><path d="M926.2 125.8 L928.5 128.4 L930.8 125.8" stroke="#666666" stroke-width="1.1" fill="none"/><path d="M932.2 125.8 L934.5 128.4 L936.8 125.8" stroke="#666666" stroke-width="1.1" fill="none"/><text x="926.6" y="116.6" font-family="Liberation Sans, sans-serif" font-size="15.5" font-weight="bold" fill="#4178BE">A</text><path d="M920 140.8 H914.8 V159.2 H920 M932 140.8 H937.3 V159.2 H932" stroke="#666666" stroke-width="1.1" fill="none"/><path d="M919.5 148.2 H932.5 M919.5 151.3 H932.5" stroke="#ADADAD" stroke-width="1" fill="none"/><path d="M926 139.5 V145.5 M922.6 142.4 L926 139 L929.4 142.4 M926 154.5 V160.6 M922.6 157.6 L926 161 L929.4 157.6" stroke="#4178BE" stroke-width="1.9" fill="none"/><path d="M914.3 175 H931 L934.2 181.4 L931 187.8 H914.3 L918.6 181.4 Z" fill="#5DA48B"/><rect x="923.9" y="181.8" width="13.6" height="10.6" fill="#fff" stroke="#666666" stroke-width="1"/><path d="M926.5 185.6 H928 M929.5 185.6 H935 M926.5 188.8 H928 M929.5 188.8 H935" stroke="#999" stroke-width="1"/><path d="M703.8 161.2 H723.9 M703.8 169.4 H723.9 M703.8 177.4 H723.9" stroke="#666666" stroke-width="1.1" fill="none"/><path d="M703.8 165.3 H720 M703.8 173.4 H720 M703.8 181.5 H720" stroke="#666666" stroke-width="1.1" fill="none"/><path d="M733.8 161.2 H754 M733.8 169.4 H754 M733.8 177.4 H754" stroke="#666666" stroke-width="1.1" fill="none"/><path d="M737 165.3 H751 M737 173.4 H751 M737 181.5 H751" stroke="#666666" stroke-width="1.1" fill="none"/><path d="M764 161.2 H784.1 M764 169.4 H784.1 M764 177.4 H784.1" stroke="#666666" stroke-width="1.1" fill="none"/><path d="M768.1 165.3 H784.1 M768.1 173.4 H784.1 M768.1 181.5 H784.1" stroke="#666666" stroke-width="1.1" fill="none"/><path d="M793.9 161.2 H814.1 M793.9 165.3 H814.1 M793.9 169.4 H814.1 M793.9 173.4 H814.1 M793.9 177.4 H814.1 M793.9 181.5 H814.1" stroke="#666666" stroke-width="1.1" fill="none"/><path d="M832 161.2 H841.8 M832 165.3 H841.8 M832 169.4 H841.8 M832 173.4 H841.8 M832 177.4 H841.8 M832 181.5 H841.8" stroke="#4178BE" stroke-width="1.1" fill="none"/><path d="M843.4 161.2 H853 M843.4 165.3 H853 M843.4 169.4 H853 M843.4 173.4 H853 M843.4 177.4 H853 M843.4 181.5 H853" stroke="#4178BE" stroke-width="1.1" fill="none"/><rect x="1165.5" y="103.5" width="204" height="92.5" fill="#fff" stroke="#ABABAB" stroke-width="1"/><rect x="1348" y="104" width="21" height="31.5" fill="#E1E1E1"/><path d="M1348 104 V195.5 M1348 135.5 H1369 M1348 165.5 H1369" stroke="#D0D0D0" stroke-width="1" fill="none"/><path d="M1355 122 H1363 L1359 117.6 Z" fill="#C9C9C9"/><path d="M1355 148.3 H1363 L1359 152.7 Z" fill="#666"/><rect x="1169.5" y="109.5" width="22" height="18" fill="#fff" stroke="#666666" stroke-width="1"/><text x="1172" y="119.3" font-family="Liberation Sans, sans-serif" font-size="9.5" font-weight="bold" fill="#4178BE">A</text><path d="M1181 112.7 H1189 M1181 115.5 H1189 M1181 118.5 H1189" stroke="#ADADAD" stroke-width="0.9" fill="none"/><path d="M1172 121.5 H1189 M1172 124.6 H1189" stroke="#ADADAD" stroke-width="0.9" fill="none"/><path d="M1201 109.2 L1221 128.7" stroke="#666666" stroke-width="1" fill="none"/><path d="M1231 109.2 L1252 129.5 M1248 129.5 H1252 V125.5" stroke="#666666" stroke-width="1" fill="none"/><rect x="1260.5" y="111.5" width="21" height="15" stroke="#666666" stroke-width="1" fill="none"/><ellipse cx="1300.9" cy="118.4" rx="10.6" ry="8" stroke="#666666" stroke-width="1" fill="none"/><rect x="1320.5" y="111.5" width="21" height="15" rx="3" stroke="#666666" stroke-width="1" fill="none"/><path d="M1180.6 138.6 L1189.8 159.3 H1171.4 Z" stroke="#666666" stroke-width="1" fill="none"/><path d="M1200 140.5 H1209.8 V156.5 H1221.8" stroke="#666666" stroke-width="1" fill="none"/><path d="M1230 140.5 H1239.5 V155 H1251.5 M1248 151.5 L1251.8 155 L1248 158.5" stroke="#666666" stroke-width="1" fill="none"/><path d="M1260.5 144 H1270.5 V139 L1280.5 148.5 L1270.5 158 V152.8 H1260.5 Z" stroke="#666666" stroke-width="1" fill="none"/><path d="M1295.2 138.5 H1303.8 V148 H1309.3 L1299.5 158.2 L1289.7 148 H1295.2 Z" stroke="#666666" stroke-width="1" fill="none"/><path d="M1325.5 140.5 H1339.5 C1335.5 143.5 1335.5 147.5 1340 148.5 H1341.7 V155 Q1341.7 157.5 1339 157.5 H1320.5 V145.5 Z" stroke="#666666" stroke-width="1" fill="none"/><path d="M1178.5 167.5 C1180.5 172 1171 176 1175.5 177.8 C1180 179 1184.5 170.5 1186.5 174.5 C1188 179 1177.5 183.5 1181.5 185.8 C1185 187.5 1189.5 182.5 1186.5 181.5 C1183.5 181 1182.5 186 1187 189.5" stroke="#666666" stroke-width="1" fill="none"/><path d="M1200 170.4 C1212 170.4 1221.8 177 1221.8 189" stroke="#666666" stroke-width="1" fill="none"/><path d="M1229.3 181.6 C1232 173 1236 170 1238.5 170.2 C1244 170.8 1243.5 187 1250 187.3 C1251.5 187.3 1252.3 187 1252.8 186.8" stroke="#666666" stroke-width="1" fill="none"/><path d="M1274.3 169 C1270 169 1271.5 172.5 1271.5 175 C1271.5 178 1269.5 178.6 1267.3 178.8 C1269.5 179 1271.5 179.6 1271.5 182.5 C1271.5 185 1270 188.5 1274.3 188.5" stroke="#666666" stroke-width="1" fill="none"/><path d="M1297.6 169 C1302 169 1300.5 172.5 1300.5 175 C1300.5 178 1302.5 178.6 1304.7 178.8 C1302.5 179 1300.5 179.6 1300.5 182.5 C1300.5 185 1302 188.5 1297.6 188.5" stroke="#666666" stroke-width="1" fill="none"/><path d="M1330.5 168.4 L1333.2 176.6 H1342 L1335 181.8 L1337.6 190 L1330.5 185 L1323.4 190 L1326 181.8 L1319.2 176.6 H1327.8 Z" stroke="#666666" stroke-width="1" fill="none"/><rect x="1414" y="114" width="13.2" height="13" fill="#EBC27F"/><rect x="1402" y="126" width="13.2" height="13" fill="#EBC27F"/><rect x="1394.5" y="106.5" width="18.5" height="18" fill="#fff" stroke="#777" stroke-width="1"/><rect x="1416.5" y="128.5" width="18.5" height="18" fill="#fff" stroke="#777" stroke-width="1"/><rect x="1497.5" y="107.5" width="38.5" height="38.5" rx="8" fill="#fff" stroke="#8A8A8A" stroke-width="1"/><path d="M1541.3 118.8 L1541.3 127.5 L1534 134.5 L1529.5 130 Z" fill="#808080"/><path d="M1528.3 131.2 L1532.8 135.7 L1530.3 138.3 L1525.8 133.8 Z" fill="#808080"/><path d="M1508 150.5 C1513.5 146 1514.5 140 1520 138.3 C1523.5 137.5 1527.3 140 1527.5 143.5 C1527.5 148.5 1521 151.5 1508 150.5 Z" fill="#4A86C6"/><path d="M1521.5 139.6 C1524.5 140.3 1525.8 142 1525.6 144.8 C1525.3 146 1524.7 146.6 1524 147 C1524.5 144 1523.5 141.5 1521.5 139.6 Z" fill="#fff"/><path d="M1593 107.5 L1600.5 115 L1593 122.5 L1585.5 115 Z" fill="#fff" stroke="#666666" stroke-width="1"/><path d="M1591 112 V105.5 Q1591 103.6 1593 103.6 Q1595 103.6 1595 105.5 V110" stroke="#666666" stroke-width="1" fill="none"/><circle cx="1593" cy="110.5" r="1.1" fill="#666666"/><path d="M1598.6 109 C1603 109.6 1604.6 113.5 1602.6 119.8 C1602.3 116 1601.5 113.8 1600.6 113 Z" fill="#4178BE"/><rect x="1581" y="121.2" width="24" height="5.8" fill="#ED7D31"/><path d="M1597.5 135.5 H1581.8 V150 H1588" stroke="#666666" stroke-width="1" fill="none"/><path d="M1589.3 149 L1601.2 137.3 L1603.6 139.7 L1591.7 151.4 L1588.3 152.3 Z" fill="#4178BE"/><path d="M1602 136.4 L1603 135.4 L1605.4 137.8 L1604.4 138.8 Z" fill="#4178BE"/><rect x="1581" y="152" width="24" height="5.8" fill="#4472C4"/><circle cx="1750" cy="112" r="6" fill="none" stroke="#3F7FC5" stroke-width="2"/><path d="M1745.6 116.7 L1740 123" stroke="#3F7FC5" stroke-width="2.8" stroke-linecap="round"/><text x="1737" y="145.3" font-family="Liberation Sans, sans-serif" font-size="13" fill="#363636">a<tspan fill="#8E4FB5">b</tspan></text><text x="1745" y="156" font-family="Liberation Sans, sans-serif" font-size="13" fill="#363636">a<tspan fill="#3F7FC5">c</tspan></text><path d="M1738 148.5 C1738 152 1739.5 152.6 1743 152.6 M1741 150.4 L1743.4 152.6 L1741 154.8" stroke="#3F7FC5" stroke-width="1.1" fill="none"/><path d="M1742.5 167.5 V184 L1746.5 180.3 L1749.8 187.3 L1752.3 186.2 L1749.2 179.3 L1755 179.3 Z" fill="#fff" stroke="#666666" stroke-width="1"/><text x="667.5" y="131" font-family="Liberation Sans, sans-serif" font-size="14" fill="#777">A</text><path d="M674 133 L681.5 125.5 L686 130 L678.5 137.5 Z" fill="#EE8A9B"/><path d="M672.3 134.8 L674 133 L678.5 137.5 L676.8 139.3 Z" fill="#F3B2BD"/></svg>
<div style="left:1333.5px;top:166.5px;width:307px;height:75px;background:#fff;border:1px solid #C6C6C6;box-sizing:border-box;box-shadow:0 1px 4px rgba(0,0,0,0.25);"></div>
<div style="left:1337.3px;top:170.3px;width:179.5px;height:35px;background:#fff;border:1px solid #C6C6C6;box-sizing:border-box;"></div>
<div style="left:1450.3px;top:170.3px;width:1px;height:35px;background:#C6C6C6;"></div>
<span class="t" style="left:1339.64px;top:178px;font-size:18px;line-height:20px;color:#363636;transform:scaleX(0.9542);overflow:hidden;">Calibri (Textl</span>
<span class="t" style="left:1453.59px;top:178px;font-size:18px;line-height:20px;color:#363636;transform:scaleX(1.0072);">28</span>
<svg style="left:1438.5px;top:186.0px;" width="8" height="4" viewBox="0 0 8 4"><path d="M0 0 L8 0 L4.0 4 Z" fill="#666"/></svg>
<svg style="left:1504.0px;top:186.0px;" width="8" height="4" viewBox="0 0 8 4"><path d="M0 0 L8 0 L4.0 4 Z" fill="#666"/></svg>
<span class="t" style="left:1522.5px;top:177px;font-size:21.8px;line-height:25px;color:#363636;transform:scaleX(1.0688);">A</span>
<span class="t" style="left:1553.3px;top:182px;font-size:16.8px;line-height:19px;color:#363636;transform:scaleX(1.0923);">A</span>
<svg style="left:1534px;top:177px;" width="8" height="5" viewBox="0 0 8 5"><path d="M0 5 L4 0 L8 5 Z" fill="#4A7EBB"/></svg>
<svg style="left:1564px;top:177px;" width="8" height="5" viewBox="0 0 8 5"><path d="M0 0 L8 0 L4 5 Z" fill="#4A7EBB"/></svg>
<span class="t" style="left:1345.43px;top:210px;font-size:20.3px;line-height:22px;color:#363636;font-weight:bold;transform:scaleX(0.9667);">F</span>
<span class="t" style="left:1373.79px;top:210px;font-size:20.3px;line-height:22px;color:#363636;font-weight:bold;font-style:italic;transform:scaleX(1.0050);">K</span>
<span class="t" style="left:1403.29px;top:210px;font-size:20.3px;line-height:22px;color:#363636;transform:scaleX(1.1238);">U</span>
<div style="left:1405px;top:230px;width:13px;height:1.5px;background:#363636;"></div>
<div style="left:1427px;top:206px;width:30px;height:31.5px;background:#C6C6C6;"></div>
<span class="t" style="left:1519.46px;top:208px;font-size:14px;line-height:16px;color:#363636;transform:scaleX(0.9705);">ab</span>
<svg style="left:1529px;top:211px;" width="16" height="17" viewBox="0 0 16 17"><path d="M3 16 L1 13 L11 2 L15 5 L5 16 Z" fill="#666"/><path d="M0 17 L2 13 L5 16 Z" fill="#888"/></svg>
<div style="left:1520px;top:228px;width:24px;height:5.5px;background:#FFF200;"></div>
<svg style="left:1550.0px;top:221.0px;" width="8" height="4" viewBox="0 0 8 4"><path d="M0 0 L8 0 L4.0 4 Z" fill="#666"/></svg>
<span class="t" style="left:1568.7px;top:209px;font-size:21.5px;line-height:24px;color:#363636;transform:scaleX(1.1189);">A</span>
<div style="left:1564.5px;top:228px;width:24.5px;height:5.5px;background:#E81123;"></div>
<svg style="left:1595.0px;top:221.0px;" width="8" height="4" viewBox="0 0 8 4"><path d="M0 0 L8 0 L4.0 4 Z" fill="#666"/></svg>
<div style="left:1334px;top:265px;width:281px;height:750px;background:#fff;border:1px solid #C6C6C6;box-sizing:border-box;box-shadow:0 2px 5px rgba(0,0,0,0.28);"></div>
<div style="left:1369px;top:339px;width:244px;height:32px;background:#E9E9E9;"></div>
<span class="t" style="left:1377.32px;top:345px;font-size:18.3px;line-height:21px;color:#505050;font-weight:bold;transform:scaleX(0.9942);">Einfügeoptionen:</span>
<div style="left:1335px;top:642px;width:278px;height:36px;background:#C5C5C5;"></div>
<div style="left:1337px;top:531px;width:30px;height:30px;background:#C6C6C6;border:1px solid #9E9E9E;box-sizing:border-box;"></div>
<span class="t" style="left:1376.6px;top:275px;font-size:18.3px;line-height:21px;color:#B4B0B8;transform:scaleX(0.9592);">Auss<u>c</u>hneiden</span>
<span class="t" style="left:1376.57px;top:311px;font-size:18.3px;line-height:21px;color:#B4B0B8;transform:scaleX(0.9745);">K<u>o</u>pieren</span>
<span class="t" style="left:1376.44px;top:428px;font-size:18.3px;line-height:21px;color:#363636;transform:scaleX(0.9841);">Te<u>x</u>tbearbeitung beenden</span>
<span class="t" style="left:1376.51px;top:464px;font-size:18.3px;line-height:21px;color:#363636;transform:scaleX(0.9576);"><u>S</u>chriftart...</span>
<span class="t" style="left:1376.6px;top:500px;font-size:18.3px;line-height:21px;color:#363636;transform:scaleX(0.9470);">A<u>b</u>satz...</span>
<span class="t" style="left:1376.6px;top:536px;font-size:18.3px;line-height:21px;color:#363636;transform:scaleX(0.9603);">Aufz<u>ä</u>hlungszeichen</span>
<span class="t" style="left:1376.53px;top:572px;font-size:18.3px;line-height:21px;color:#363636;"><u>N</u>ummerierung</span>
<span class="t" style="left:1376.38px;top:610px;font-size:18.3px;line-height:21px;color:#363636;transform:scaleX(0.9859);">In SmartArt <u>k</u>onvertieren</span>
<span class="t" style="left:1376.59px;top:650px;font-size:18.3px;line-height:21px;color:#2b2b2b;transform:scaleX(0.9664);"><u>L</u>ink bearbeiten</span>
<span class="t" style="left:1376.54px;top:686px;font-size:18.3px;line-height:21px;color:#363636;"><u>L</u>ink öffnen</span>
<span class="t" style="left:1376.57px;top:722px;font-size:18.3px;line-height:21px;color:#363636;transform:scaleX(0.9770);">L<u>i</u>nk kopieren</span>
<span class="t" style="left:1376.59px;top:758px;font-size:18.3px;line-height:21px;color:#363636;transform:scaleX(0.9658);">Li<u>n</u>k entfernen</span>
<span class="t" style="left:1376.42px;top:797px;font-size:18.3px;line-height:21px;color:#363636;transform:scaleX(0.9629);">Intelligente <u>S</u>uche</span>
<span class="t" style="left:1376.49px;top:836px;font-size:18.3px;line-height:21px;color:#363636;transform:scaleX(0.9853);">S<u>y</u>nonyme</span>
<span class="t" style="left:1376.7px;top:872px;font-size:18.3px;line-height:21px;color:#363636;transform:scaleX(0.9510);"><u>Ü</u>bersetzen</span>
<span class="t" style="left:1376.44px;top:911px;font-size:18.3px;line-height:21px;color:#363636;transform:scaleX(0.9808);"><u>T</u>exteffekte formatieren...</span>
<span class="t" style="left:1376.57px;top:947px;font-size:18.3px;line-height:21px;color:#363636;transform:scaleX(0.9810);">F<u>o</u>rm formatieren...</span>
<span class="t" style="left:1376.58px;top:986px;font-size:18.3px;line-height:21px;color:#363636;transform:scaleX(0.9740);">Ne<u>u</u>er Kommentar</span>
<div style="left:1380px;top:417.0px;width:233px;height:1px;background:#E1E1E1;"></div>
<div style="left:1380px;top:599.8px;width:233px;height:1px;background:#E1E1E1;"></div>
<div style="left:1380px;top:639.1px;width:233px;height:1px;background:#E1E1E1;"></div>
<div style="left:1380px;top:785.5px;width:233px;height:1px;background:#E1E1E1;"></div>
<div style="left:1380px;top:824.8px;width:233px;height:1px;background:#E1E1E1;"></div>
<div style="left:1380px;top:899.5px;width:233px;height:1px;background:#E1E1E1;"></div>
<div style="left:1380px;top:975.0px;width:233px;height:1px;background:#E1E1E1;"></div>
<div style="left:1579.5px;top:536px;width:1px;height:21px;background:#E1E1E1;"></div>
<div style="left:1579.5px;top:572px;width:1px;height:21px;background:#E1E1E1;"></div>
<svg style="left:1593px;top:540.0px;" width="6" height="11" viewBox="0 0 6 11"><path d="M0 0 L6 5.5 L0 11 Z" fill="#666"/></svg>
<svg style="left:1593px;top:576.0px;" width="6" height="11" viewBox="0 0 6 11"><path d="M0 0 L6 5.5 L0 11 Z" fill="#666"/></svg>
<svg style="left:1593px;top:615.0px;" width="6" height="11" viewBox="0 0 6 11"><path d="M0 0 L6 5.5 L0 11 Z" fill="#666"/></svg>
<svg style="left:1593px;top:840.5px;" width="6" height="11" viewBox="0 0 6 11"><path d="M0 0 L6 5.5 L0 11 Z" fill="#666"/></svg>
<svg style="left:0px;top:0px;" width="1921" height="1018" viewBox="0 0 1921 1018"><path d="M1581 177.2 H1603 M1581 197.39999999999998 H1603" stroke="#BDBDBD" stroke-width="1.1" fill="none"/><path d="M1592 181.29999999999998 H1603 M1592 185.29999999999998 H1603 M1592 189.39999999999998 H1603 M1592 193.39999999999998 H1603" stroke="#BDBDBD" stroke-width="1.1" fill="none"/><path d="M1590 187.39999999999998 H1582.5 M1586 183.39999999999998 L1581.7 187.39999999999998 L1586 191.39999999999998" stroke="#B0B0B0" stroke-width="2.2" fill="none"/><path d="M1611 177.2 H1633 M1611 197.39999999999998 H1633" stroke="#666666" stroke-width="1.1" fill="none"/><path d="M1622 181.29999999999998 H1633 M1622 185.29999999999998 H1633 M1622 189.39999999999998 H1633 M1622 193.39999999999998 H1633" stroke="#666666" stroke-width="1.1" fill="none"/><path d="M1611 187.39999999999998 H1618.5 M1615 183.39999999999998 L1619.3 187.39999999999998 L1615 191.39999999999998" stroke="#4178BE" stroke-width="2.2" fill="none"/><path d="M1432 212 H1452.2 M1432 220 H1452.2 M1432 227.9 H1452.2" stroke="#666666" stroke-width="1.1" fill="none"/><path d="M1432 216 H1448.5 M1432 223.9 H1448.5 M1432 231.8 H1448.5" stroke="#666666" stroke-width="1.1" fill="none"/><path d="M1462 212 H1482 M1462 220 H1482 M1462 227.9 H1482" stroke="#666666" stroke-width="1.1" fill="none"/><path d="M1465 216 H1479 M1465 223.9 H1479 M1465 231.8 H1479" stroke="#666666" stroke-width="1.1" fill="none"/><path d="M1492 212 H1512.2 M1492 220 H1512.2 M1492 227.9 H1512.2" stroke="#666666" stroke-width="1.1" fill="none"/><path d="M1496 216 H1512.2 M1496 223.9 H1512.2 M1496 231.8 H1512.2" stroke="#666666" stroke-width="1.1" fill="none"/><path d="M1610.5 222.4 L1620.2 219.4 L1626.2 226.9 L1619.7 232.4 Z" fill="#EBC27F"/><path d="M1619.2 217.9 L1622.7 215.4 L1629.2 223.4 L1625.7 225.9 Z" fill="#737373"/><path d="M1624.7 215.9 L1631.2 212 L1633.5 215 L1627.2 219.4 Z" fill="#737373"/><path d="M1345.3 274.3 L1354.6 289.5 M1357 274.3 L1347.7 289.5" stroke="#B4B4B4" stroke-width="2" fill="none"/><circle cx="1345" cy="292" r="3.1" fill="none" stroke="#B4B4B4" stroke-width="1.5"/><circle cx="1357.3" cy="292" r="3.1" fill="none" stroke="#B4B4B4" stroke-width="1.5"/><g fill="#F7F1F7" stroke="#B9B4BC" stroke-width="1"><path d="M1342.5 310.5 H1349.5 L1352.5 313.5 V324.5 H1342.5 Z"/><path d="M1351.5 317.5 H1358.5 L1361.5 320.5 V331.5 H1351.5 Z"/></g><path d="M1344.5 315 H1350.5 M1344.5 317.5 H1350.5 M1344.5 320 H1349.5 M1353.5 323 H1359.5 M1353.5 325.5 H1359.5 M1353.5 328 H1359.5" stroke="#B9B4BC" stroke-width="0.9"/><rect x="1343" y="347" width="18" height="17.6" rx="1.3" fill="#EBC27F"/><path d="M1346.0 349.8 V346.6 H1349.4 V345.4 Q1349.4 344.1 1350.7 344.1 H1353.3 Q1354.6 344.1 1354.6 345.4 V346.6 H1358.0 V349.8 Z" fill="#737373"/><circle cx="1352.0" cy="345.9" r="0.8" fill="#fff"/><path d="M1353.5 353.5 H1360 L1363.7 357.3 V366.3 H1353.5 Z" fill="#fff" stroke="#737373" stroke-width="1"/><path d="M1360 353.5 V357.3 H1363.7" fill="none" stroke="#737373" stroke-width="0.9"/><rect x="1379" y="380.7" width="26" height="29" rx="1.8777777777777778" fill="#EBC27F"/><path d="M1385.0 384.7444444444444 V380.1222222222222 H1388.2444444444445 V378.38888888888886 Q1388.2444444444445 376.5111111111111 1390.1222222222223 376.5111111111111 H1393.8777777777777 Q1395.7555555555555 376.5111111111111 1395.7555555555555 378.38888888888886 V380.1222222222222 H1399.0 V384.7444444444444 Z" fill="#737373"/><circle cx="1392.0" cy="379.1111111111111" r="1.1555555555555557" fill="#fff"/><path d="M1394.5 392 H1404 L1409.7 397.8 V411 H1394.5 Z" fill="#fff" stroke="#737373" stroke-width="1"/><path d="M1404 392 V397.8 H1409.7" fill="none" stroke="#737373" stroke-width="1"/><rect x="1428.1066666666666" y="383.9066666666667" width="19.486666666666665" height="22.786666666666665" rx="1.0533333333333335" fill="#fff" stroke="#EBC27F" stroke-width="4.213333333333334"/><path d="M1430.9499999999998 385.4866666666667 V381.27333333333337 H1434.4266666666665 V379.6933333333333 Q1434.4266666666665 377.9816666666667 1436.1383333333333 377.9816666666667 H1439.5616666666665 Q1441.2733333333333 377.9816666666667 1441.2733333333333 379.6933333333333 V381.27333333333337 H1444.75 V385.4866666666667 Z" fill="#737373"/><circle cx="1437.85" cy="380.3516666666667" r="1.0533333333333335" fill="#fff"/><rect x="1439.5" y="395.5" width="15" height="15" fill="#fff" stroke="#737373" stroke-width="1"/><path d="M1441 408.8 L1445.8 402.8 L1448.6 405.8 L1450.2 404.3 L1453 408.8 Z" fill="#3F73B8"/><circle cx="1450" cy="399.6" r="1.3" fill="#EBB54C"/><text x="1345" y="481" font-family="Liberation Sans, sans-serif" font-size="18.5" font-weight="bold" fill="#444" textLength="13.2" lengthAdjust="spacingAndGlyphs">A</text><path d="M1347.5 500.6 H1361" stroke="#666666" stroke-width="1" fill="none"/><path d="M1342.2 504.2 H1361" stroke="#666666" stroke-width="1" fill="none"/><path d="M1342.2 507.8 H1349 M1342.2 511.3 H1349 M1342.2 514.8 H1349 M1342.2 518.3 H1349" stroke="#666666" stroke-width="1" fill="none"/><path d="M1355 506.8 H1360.7 M1356.2 506.8 V518.6 M1359.3 506.8 V518.6" stroke="#666666" stroke-width="1.1" fill="none"/><path d="M1356.2 506.8 H1354.6 A3 3 0 0 0 1354.6 512.8 H1356.2 Z" fill="#666666"/><circle cx="1343.5" cy="537.7" r="2.3" fill="#4178BE"/><circle cx="1343.5" cy="545.7" r="2.3" fill="#4178BE"/><circle cx="1343.5" cy="553.7" r="2.3" fill="#4178BE"/><path d="M1348.1 537.7 H1363.3 M1348.1 545.7 H1363.3 M1348.1 553.7 H1363.3" stroke="#666666" stroke-width="1.2" fill="none"/><text x="1341.3" y="576.6" font-family="Liberation Sans, sans-serif" font-size="8.2" font-weight="bold" fill="#4178BE">1</text><text x="1341.3" y="584.6" font-family="Liberation Sans, sans-serif" font-size="8.2" font-weight="bold" fill="#4178BE">2</text><text x="1341.3" y="592.6" font-family="Liberation Sans, sans-serif" font-size="8.2" font-weight="bold" fill="#4178BE">3</text><path d="M1348.3 573.6 H1363.3 M1348.3 581.6 H1363.3 M1348.3 589.6 H1363.3" stroke="#666666" stroke-width="1.2" fill="none"/><path d="M1340 613.5 H1356.5 L1360.3 619.7 L1356.5 626 H1340 L1344.3 619.7 Z" fill="#5DA48B"/><rect x="1349.9" y="620" width="13.8" height="10.6" fill="#fff" stroke="#666666" stroke-width="1"/><path d="M1352.5 623.8 H1354 M1355.5 623.8 H1361 M1352.5 627 H1354 M1355.5 627 H1361" stroke="#999" stroke-width="1"/><circle cx="1349.5" cy="657.2" r="7.8" fill="#fff" stroke="#666666" stroke-width="1"/><path d="M1341.8 657.2 H1357.2 M1349.5 649.5 V665 M1343 653 H1356 M1343 661.4 H1356 M1349.5 649.5 C1344.8 653 1344.8 661.4 1349.5 665 M1349.5 649.5 C1354.2 653 1354.2 661.4 1349.5 665" stroke="#666666" stroke-width="0.8" fill="none"/><rect x="1344" y="661.6" width="20" height="11.4" rx="5" fill="#C5C5C5"/><g fill="none" stroke="#3F7FC5" stroke-width="2.2"><rect x="1345.5" y="665.4000000000001" width="10.5" height="5.6" rx="2.8"/><rect x="1352.5" y="663.2" width="10.5" height="5.6" rx="2.8"/></g><circle cx="1346.5" cy="690.6" r="6" fill="#fff" stroke="#3F7FC5" stroke-width="1.6"/><path d="M1341 706.8 V690.5 H1348 L1350 693 H1359 V696 H1363 L1359 706.8 Z" fill="#EBC27F"/><path d="M1344.5 696.5 H1363.2 L1359.3 706.8 H1341 Z" fill="#F0CD93"/><g fill="none" stroke="#3F7FC5" stroke-width="2.2"><rect x="1342.8" y="764.0" width="10.5" height="5.6" rx="2.8"/><rect x="1349.8" y="761.8" width="10.5" height="5.6" rx="2.8"/></g><path d="M1352.6 769.3 L1363.4 779.3 M1363.4 769.3 L1352.6 779.3" stroke="#D2502E" stroke-width="1.9"/><circle cx="1354.5" cy="804.7" r="7.2" fill="#fff" stroke="#3F7FC5" stroke-width="1.9"/><path d="M1349.3 810.4 L1342.6 816" stroke="#3F7FC5" stroke-width="3" stroke-linecap="round"/><rect x="1353.7" y="803.4" width="1.7" height="5.2" fill="#444"/><circle cx="1354.55" cy="800.9" r="1.1" fill="#444"/><path d="M1341.4 871.3 H1349.6 L1346.7 874.2 L1350.4 877.9 L1348 880.3 L1344.3 876.6 L1341.4 879.5 Z" fill="#1E7FD8"/><text x="1340.8" y="892.6" font-family="Liberation Sans, sans-serif" font-size="16.5" fill="#1E7FD8" textLength="7.8" lengthAdjust="spacingAndGlyphs">a</text><g stroke="#2C9A45" stroke-width="1.5" fill="none"><path d="M1352.3 874.6 H1362 M1356.4 871.2 V878 C1356.4 884 1351.8 885 1351.6 882 C1351.6 879 1357.8 877.3 1360.8 879.2 C1363.8 881.2 1361.8 885 1358 885.2"/></g><path d="M1362.8 893 H1354.6 L1357.5 890.1 L1353.8 886.4 L1356.2 884 L1359.9 887.7 L1362.8 884.8 Z" fill="#1F7A35"/><text x="1342.2" y="931" font-family="Liberation Sans, sans-serif" font-size="29" font-style="italic" fill="#4A7EBB" stroke="#4A7EBB" stroke-width="0.5" textLength="18.5" lengthAdjust="spacingAndGlyphs">A</text><path d="M1346.5 947.8 L1352.5 953.8 L1346.5 959.8 L1340.5 953.8 Z" fill="#fff" stroke="#666666" stroke-width="1"/><path d="M1344.9 951.5 V946.4 Q1344.9 944.9 1346.5 944.9 Q1348.1 944.9 1348.1 946.4 V950" stroke="#666666" stroke-width="1" fill="none"/><path d="M1350.8 949 C1354.6 949.6 1356 952.8 1354.3 958 C1354 955 1353.4 953.2 1352.6 952.5 Z" fill="#4178BE"/><path d="M1363.6 952.6 L1363.6 957.3 L1357.3 963.3 L1355 961 Z" fill="#777"/><path d="M1347 968.4 C1350.5 966 1350.8 962.6 1354 962 C1356.2 961.8 1357.6 963.5 1357.2 965.3 C1356.6 968 1352.6 969.2 1347 968.4 Z" fill="#4A86C6"/><path d="M1350 987.2 H1361 Q1362.6 987.2 1362.6 988.8 V998.5 Q1362.6 1000.2 1361 1000.2 H1351 L1346.8 1004.4 V1000.2 H1343.6 Q1342 1000.2 1342 998.5 V994" fill="none" stroke="#666666" stroke-width="1"/><path d="M1340.3 988.8 H1348.7 M1344.5 984.6 V993" stroke="#4FA184" stroke-width="2.2"/></svg>
<div style="left:1315px;top:628px;width:315px;height:65px;border:8px solid #0FD146;box-sizing:border-box;"></div>
</body></html>
